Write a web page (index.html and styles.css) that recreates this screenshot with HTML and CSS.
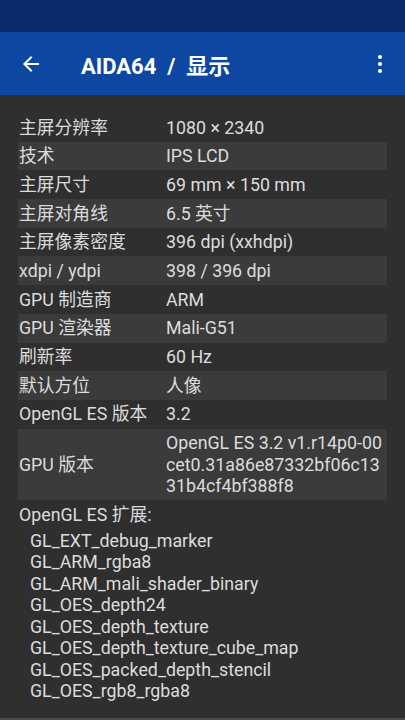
FILE: index.html
```html
<!DOCTYPE html>
<html lang="zh">
<head>
    <meta charset="UTF-8">
    <meta name="viewport" content="width=device-width, initial-scale=1.0">
    <title>AIDA64 / 显示</title>
    <link rel="stylesheet" href="styles.css">
</head>
<body>

    <div class="statusBar"></div>

    <div class="appBar">
        <svg class="backIcon" viewBox="0 0 24 24" width="24" height="24">
            <path fill="#fff" d="M20 11H7.83l5.59-5.59L12 4l-8 8 8 8 1.41-1.41L7.83 13H20v-2z"/>
        </svg>
        <div class="title">AIDA64&nbsp; / &nbsp;显示</div>
        <svg class="moreIcon" viewBox="0 0 8 24" width="8" height="24">
            <circle cx="4" cy="5" r="2.1" fill="#fff"/>
            <circle cx="4" cy="12" r="2.1" fill="#fff"/>
            <circle cx="4" cy="19" r="2.1" fill="#fff"/>
        </svg>
    </div>

    <div class="content">
        <div class="table">
            <div class="row"><div class="label">主屏分辨率</div><div class="value">1080 × 2340</div></div>
            <div class="row"><div class="label">技术</div><div class="value">IPS LCD</div></div>
            <div class="row"><div class="label">主屏尺寸</div><div class="value">69 mm × 150 mm</div></div>
            <div class="row"><div class="label">主屏对角线</div><div class="value">6.5 英寸</div></div>
            <div class="row"><div class="label">主屏像素密度</div><div class="value">396 dpi (xxhdpi)</div></div>
            <div class="row"><div class="label">xdpi / ydpi</div><div class="value">398 / 396 dpi</div></div>
            <div class="row"><div class="label">GPU 制造商</div><div class="value">ARM</div></div>
            <div class="row"><div class="label">GPU 渲染器</div><div class="value">Mali-G51</div></div>
            <div class="row"><div class="label">刷新率</div><div class="value">60 Hz</div></div>
            <div class="row"><div class="label">默认方位</div><div class="value">人像</div></div>
            <div class="row"><div class="label">OpenGL ES 版本</div><div class="value">3.2</div></div>
            <div class="row"><div class="label">GPU 版本</div><div class="value">OpenGL ES 3.2 v1.r14p0-00<br>cet0.31a86e87332bf06c13<br>31b4cf4bf388f8</div></div>
        </div>

        <div class="extHeader">OpenGL ES 扩展:</div>
        <div class="extList">
            <div>GL_EXT_debug_marker</div>
            <div>GL_ARM_rgba8</div>
            <div>GL_ARM_mali_shader_binary</div>
            <div>GL_OES_depth24</div>
            <div>GL_OES_depth_texture</div>
            <div>GL_OES_depth_texture_cube_map</div>
            <div>GL_OES_packed_depth_stencil</div>
            <div>GL_OES_rgb8_rgba8</div>
        </div>
    </div>

</body>
</html>
```

FILE: styles.css
```css
html, body {
    margin: 0;
    padding: 0;
    background-color: #2f2f2f;
}
body {
    width: 405px;
    height: 720px;
    overflow: hidden;
    font-family: Roboto, "Noto Sans CJK SC", sans-serif;
    display: flex;
    flex-direction: column;
}
.statusBar {
    height: 32px;
    background-color: #0b2b6c;
    flex-shrink: 0;
}
.appBar {
    height: 63px;
    background-color: #0d47a1;
    display: flex;
    align-items: center;
    flex-shrink: 0;
}
.backIcon {
    margin-left: 19px;
    margin-top: 1px;
}
.title {
    color: white;
    font-size: 22px;
    font-weight: bold;
    margin-left: 38px;
    flex-grow: 1;
}
.moreIcon {
    margin-right: 21px;
}
.content {
    flex-grow: 1;
    padding: 18px 18px 0 18px;
    color: #dcdcdc;
    font-size: 17.8px;
    line-height: 21.5px;
    border-bottom: 2px solid #4a4a4a;
}
.row {
    display: flex;
    align-items: center;
    padding: 3.6px 0;
}
.row:nth-child(even) {
    background-color: #3b3b3b;
}
.label {
    width: 147px;
    padding-left: 1px;
    flex-shrink: 0;
    white-space: nowrap;
}
.value {
    flex-grow: 1;
    white-space: nowrap;
}
.extHeader {
    padding: 4px 0 0 1px;
    margin-bottom: 4px;
}
.extList {
    padding-left: 12px;
}
```
